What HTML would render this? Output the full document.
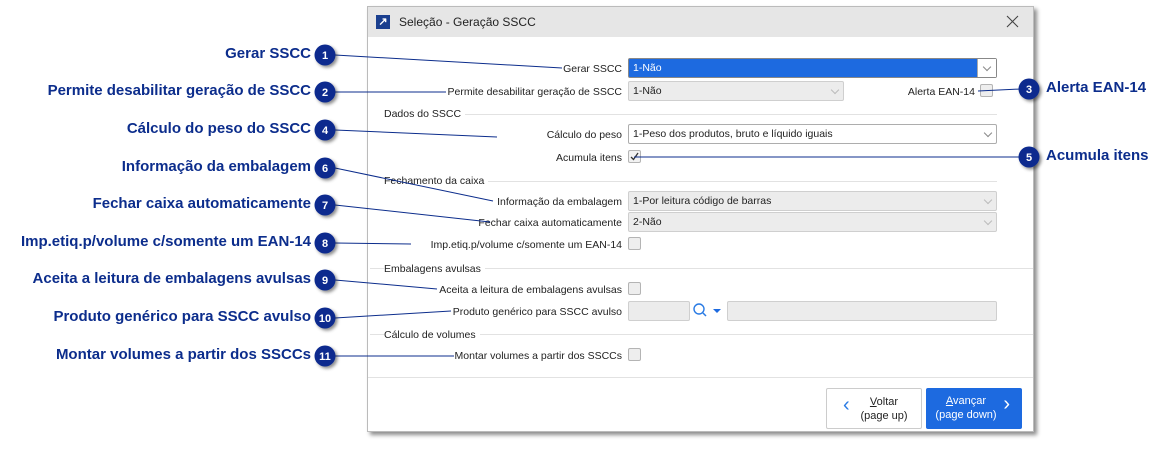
<!DOCTYPE html><html><head><meta charset="utf-8"><style>
*{margin:0;padding:0;box-sizing:border-box}
body{width:1162px;height:449px;background:#fff;position:relative;overflow:hidden;font-family:"Liberation Sans",sans-serif}
.dlg{position:absolute;left:367px;top:6px;width:667px;height:426px;background:#fff;border:1px solid #bbb;box-shadow:3px 3px 4px rgba(0,0,0,.45)}
.tb{position:absolute;left:0;top:0;right:0;height:30px;background:#e6e6e6}
.a{position:absolute;font-size:10.5px;color:#222;white-space:nowrap;line-height:14px}
.r{text-align:right}
.sec{background:#fff;padding-right:4px;z-index:2}
.sel{position:absolute;height:20px;border:1px solid #adadad;background:#fff;font-size:10.5px;line-height:18px;padding-left:4px;color:#222;border-radius:2px}
.sel.d{background:#ececec;border-color:#cfcfcf}
.sel .ar{position:absolute;right:5px;top:5px;width:6px;height:6px;border-right:1px solid #888;border-bottom:1px solid #888;transform:rotate(45deg)}
.sel.d .ar{border-color:#bbb}
.cb{position:absolute;width:13px;height:13px;border:1px solid #b4b4b4;background:#eee;border-radius:2px}
.hl{position:absolute;height:1px;background:#e2e2e2}
.lbl{position:absolute;font-weight:bold;font-size:15px;color:#0c2d8c;white-space:nowrap;text-align:right}
.btn{position:absolute;top:382px;height:41px;font-size:11px;text-align:center;line-height:14px;padding-top:6px;border-radius:2px}
</style></head><body>
<div class="dlg">
<div class="tb"></div>
<div style="position:absolute;left:8px;top:8px;width:14px;height:14px;background:#1a3f8f;color:#fff;font-size:11px;line-height:14px;text-align:center;font-weight:bold">↗</div>
<div class="a" style="left:31px;top:8px;font-size:12px">Seleção - Geração SSCC</div>
<svg style="position:absolute;left:638px;top:8px" width="14" height="14"><path d="M1 1L12 12M12 1L1 12" stroke="#444" stroke-width="1.1"/></svg>
</div>
<div class="a r" style="right:540px;top:62px">Gerar SSCC</div>
<div class="sel" style="left:628px;top:58px;width:369px;background:#1d6ae0;color:#fff;border-color:#888">1-Não<div style="position:absolute;right:0;top:0;width:19px;height:18px;background:#fff;border-left:1px solid #aaa"><div class="ar" style="right:6px"></div></div></div>
<div class="a r" style="right:540px;top:85px">Permite desabilitar geração de SSCC</div>
<div class="sel d" style="left:628px;top:81px;width:216px">1-Não<div class="ar"></div></div>
<div class="a r" style="right:187px;top:85px">Alerta EAN-14</div>
<div class="cb" style="left:980px;top:84px"></div>
<div class="hl" style="left:462px;top:114px;width:535px"></div><div class="a sec" style="left:384px;top:107px">Dados do SSCC</div>
<div class="a r" style="right:540px;top:128px">Cálculo do peso</div>
<div class="sel" style="left:628px;top:124px;width:369px">1-Peso dos produtos, bruto e líquido iguais<div class="ar"></div></div>
<div class="a r" style="right:540px;top:151px">Acumula itens</div>
<div class="cb" style="left:628px;top:150px;background:#f2f2f2"><svg width="11" height="11" style="position:absolute;left:0;top:0"><path d="M2 6L4.5 8.5L9 2" stroke="#333" stroke-width="1.3" fill="none"/></svg></div>
<div class="hl" style="left:486px;top:181px;width:511px"></div><div class="a sec" style="left:384px;top:174px">Fechamento da caixa</div>
<div class="a r" style="right:540px;top:195px">Informação da embalagem</div>
<div class="sel d" style="left:628px;top:191px;width:369px">1-Por leitura código de barras<div class="ar"></div></div>
<div class="a r" style="right:540px;top:216px">Fechar caixa automaticamente</div>
<div class="sel d" style="left:628px;top:212px;width:369px">2-Não<div class="ar"></div></div>
<div class="a r" style="right:540px;top:238px">Imp.etiq.p/volume c/somente um EAN-14</div>
<div class="cb" style="left:628px;top:237px"></div>
<div class="hl" style="left:370px;top:268px;width:663px"></div><div class="a sec" style="left:384px;top:262px">Embalagens avulsas</div>
<div class="a r" style="right:540px;top:283px">Aceita a leitura de embalagens avulsas</div>
<div class="cb" style="left:628px;top:282px"></div>
<div class="a r" style="right:540px;top:305px">Produto genérico para SSCC avulso</div>
<div class="sel d" style="left:628px;top:301px;width:62px"></div>
<svg style="position:absolute;left:692px;top:302px" width="34" height="18"><circle cx="7" cy="7" r="5" fill="none" stroke="#2a7be4" stroke-width="1.4"/><line x1="11" y1="11" x2="14" y2="14" stroke="#2a7be4" stroke-width="1.5"/><path d="M21 7h8l-4 4z" fill="#1d6ae0"/></svg>
<div class="sel d" style="left:727px;top:301px;width:270px"></div>
<div class="hl" style="left:370px;top:334px;width:663px"></div><div class="a sec" style="left:384px;top:328px">Cálculo de volumes</div>
<div class="a r" style="right:540px;top:349px">Montar volumes a partir dos SSCCs</div>
<div class="cb" style="left:628px;top:348px"></div>
<div class="hl" style="left:368px;top:377px;width:665px"></div>
<div class="btn" style="left:826px;top:388px;width:96px;border:1px solid #ccc;background:#fff;color:#222"><span style="position:absolute;left:16px;top:9px;font-size:20px;color:#2a7be4">‹</span><span style="position:relative;left:10px"><u>V</u>oltar<br>(page up)</span></div>
<div class="btn" style="left:926px;top:388px;width:96px;background:#1d6ae0;color:#fff"><span style="position:relative;left:-8px"><u>A</u>vançar<br>(page down)</span><span style="position:absolute;right:12px;top:9px;font-size:20px">›</span></div>
<svg style="position:absolute;left:0;top:0;z-index:5" width="1162" height="449">
<defs><filter id="s"><feDropShadow dx="2" dy="2" stdDeviation="1.5" flood-opacity=".45"/></filter></defs>
<g stroke="#0c2d8c" stroke-width="1" fill="none">
<line x1="335" y1="55" x2="562" y2="68"/><line x1="335" y1="92" x2="446" y2="92"/><line x1="335" y1="130" x2="497" y2="137"/>
<line x1="335" y1="168" x2="493" y2="201"/><line x1="335" y1="205" x2="490" y2="222"/><line x1="335" y1="243" x2="411" y2="244"/>
<line x1="335" y1="280" x2="437" y2="289"/><line x1="335" y1="318" x2="451" y2="311"/><line x1="335" y1="356" x2="454" y2="356"/>
<line x1="1020" y1="89" x2="978" y2="91"/><line x1="1020" y1="157" x2="634" y2="157"/></g>
<g filter="url(#s)" fill="#0a2a8e">
<circle cx="325" cy="55" r="10.5"/><circle cx="325" cy="92" r="10.5"/><circle cx="325" cy="130" r="10.5"/><circle cx="325" cy="168" r="10.5"/><circle cx="325" cy="205" r="10.5"/><circle cx="325" cy="243" r="10.5"/><circle cx="325" cy="280" r="10.5"/><circle cx="325" cy="318" r="10.5"/><circle cx="325" cy="356" r="10.5"/><circle cx="1029" cy="89" r="10.5"/><circle cx="1029" cy="157" r="10.5"/></g>
<g fill="#fff" font-family="Liberation Sans" font-weight="bold" font-size="11" text-anchor="middle">
<text x="325" y="59">1</text><text x="325" y="96">2</text><text x="325" y="134">4</text><text x="325" y="172">6</text><text x="325" y="209">7</text><text x="325" y="247">8</text><text x="325" y="284">9</text><text x="325" y="322">10</text><text x="325" y="360">11</text><text x="1029" y="93">3</text><text x="1029" y="161">5</text></g>
</svg>
<div class="lbl" style="right:851px;top:45px">Gerar SSCC</div>
<div class="lbl" style="right:851px;top:82px">Permite desabilitar geração de SSCC</div>
<div class="lbl" style="right:851px;top:120px">Cálculo do peso do SSCC</div>
<div class="lbl" style="right:851px;top:158px">Informação da embalagem</div>
<div class="lbl" style="right:851px;top:195px">Fechar caixa automaticamente</div>
<div class="lbl" style="right:851px;top:233px">Imp.etiq.p/volume c/somente um EAN-14</div>
<div class="lbl" style="right:851px;top:270px">Aceita a leitura de embalagens avulsas</div>
<div class="lbl" style="right:851px;top:308px">Produto genérico para SSCC avulso</div>
<div class="lbl" style="right:851px;top:346px">Montar volumes a partir dos SSCCs</div>
<div class="lbl" style="left:1046px;top:79px;text-align:left">Alerta EAN-14</div>
<div class="lbl" style="left:1046px;top:147px;text-align:left">Acumula itens</div>
</body></html>
